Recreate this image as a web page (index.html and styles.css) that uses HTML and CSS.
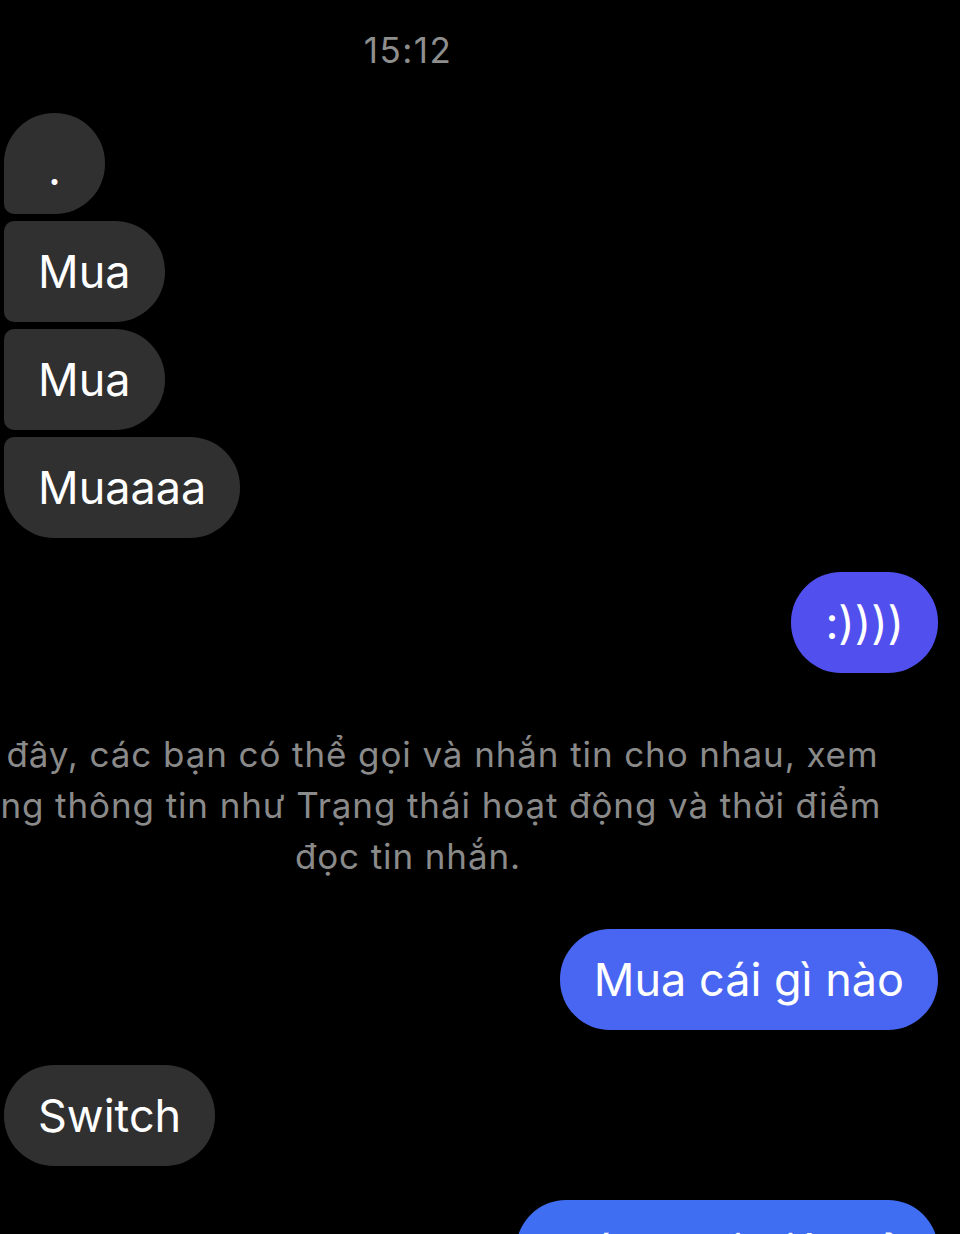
FILE: index.html
```html
<!DOCTYPE html>
<html lang="vi">
<head>
    <meta charset="UTF-8">
    <meta name="viewport" content="width=device-width, initial-scale=1.0">
    <title>Messenger</title>
    <link rel="stylesheet" href="styles.css">
</head>
<body>
    <div class="chat">
        <div class="center-row">
            <div class="time">15:12</div>
        </div>

        <div class="group incoming">
            <div class="bubble gray first dot">.</div>
            <div class="bubble gray middle">Mua</div>
            <div class="bubble gray middle">Mua</div>
            <div class="bubble gray last">Muaaaa</div>
        </div>

        <div class="group outgoing gap-smile">
            <div class="bubble blue tone-1">:))))</div>
        </div>

        <div class="center-row notice">
            <p>Giờ đây, các bạn có thể gọi và nhắn tin cho nhau, xem<br>những thông tin như Trạng thái hoạt động và thời điểm<br>đọc tin nhắn.</p>
        </div>

        <div class="group outgoing gap-reply">
            <div class="bubble blue tone-2">Mua cái gì nào</div>
        </div>

        <div class="group incoming gap-switch">
            <div class="bubble gray">Switch</div>
        </div>

        <div class="group outgoing gap-last">
            <div class="bubble blue tone-3">Máy chơi điện tử</div>
        </div>
    </div>
</body>
</html>
```

FILE: styles.css
```css
html, body { margin: 0; padding: 0; background-color: #000; }
body { width: 960px; height: 1234px; overflow: hidden; font-family: Inter, "Noto Sans", sans-serif; color: #fff; }
.chat { display: flex; flex-direction: column; padding: 0 22px 0 4px; }

/* centered rows sit on the phone's middle, not the crop's */
.center-row { display: flex; justify-content: center; width: 816px; margin-left: -4px; }
.time { margin-top: 30px; font-size: 35px; line-height: 40px; color: #8e8e8e; letter-spacing: 1.5px; }
.notice { margin-top: 56px; }
.notice p { margin: 0; white-space: nowrap; text-align: center; font-size: 35px; line-height: 51px; letter-spacing: 0.9px; color: #8a8a8a; }

.group { display: flex; flex-direction: column; gap: 7px; }
.incoming { align-items: flex-start; margin-top: 43px; }
.outgoing { align-items: flex-end; }
.gap-smile { margin-top: 34px; }
.gap-reply { margin-top: 47px; }
.gap-switch { margin-top: 35px; }
.gap-last { margin-top: 34px; }

.bubble { box-sizing: border-box; height: 101px; padding: 0 34px; border-radius: 50px; font-size: 45px; line-height: 101px; white-space: nowrap; }
.gray { background-color: #303030; }
.blue { color: #fff; }
.tone-1 { background-color: #5150ee; }
.tone-2 { background-color: #4866f1; }
.tone-3 { background-color: #3f6ef2; }

.first { border-bottom-left-radius: 10px; }
.middle { border-top-left-radius: 10px; border-bottom-left-radius: 10px; }
.last { border-top-left-radius: 10px; }
.dot { width: 101px; padding: 0; text-align: center; line-height: 112px; }
```
